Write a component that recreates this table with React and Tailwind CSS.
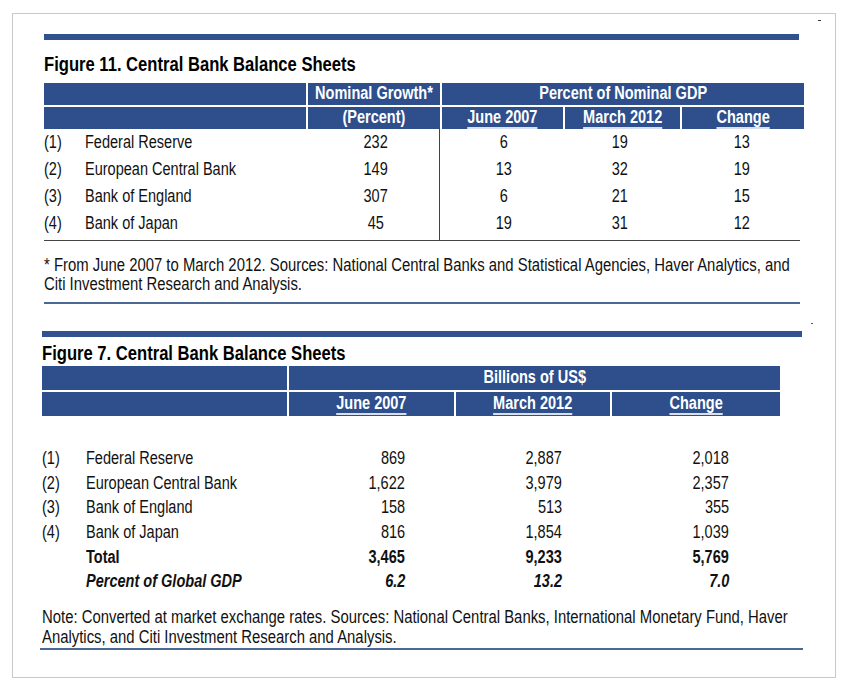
import React from "react";

const rows1 = [
  ["(1)", "Federal Reserve", "232", "6", "19", "13"],
  ["(2)", "European Central Bank", "149", "13", "32", "19"],
  ["(3)", "Bank of England", "307", "6", "21", "15"],
  ["(4)", "Bank of Japan", "45", "19", "31", "12"],
];

const rows2 = [
  ["(1)", "Federal Reserve", "869", "2,887", "2,018"],
  ["(2)", "European Central Bank", "1,622", "3,979", "2,357"],
  ["(3)", "Bank of England", "158", "513", "355"],
  ["(4)", "Bank of Japan", "816", "1,854", "1,039"],
];

// narrow text: Arial Narrow look made from Liberation Sans squeezed sideways
const N = ({ children, o = "origin-left" }) => (
  <span className={"inline-block whitespace-nowrap scale-x-[0.83] " + o}>{children}</span>
);

const P = ({ children }) => (
  <span className="inline-block whitespace-nowrap scale-x-[0.85] origin-left">{children}</span>
);

const Head = ({ children, className = "" }) => (
  <div className={"bg-[#2e4f8c] text-white font-bold text-[17.5px] leading-none flex items-center justify-center " + className}>
    {children}
  </div>
);

const Under = ({ children }) => (
  <span className="underline decoration-[#d8e0ee] decoration-2 underline-offset-[4px]">{children}</span>
);

export default function App() {
  return (
    <div className="w-full h-[688px] overflow-hidden bg-white pt-[13px] pl-[12px] font-['Liberation_Sans',sans-serif] text-[#111]">
      <div className="w-[824px] h-[665px] border border-[#c9c9c9] relative">
        <div className="absolute right-[14px] top-[6px] w-[3px] h-[1px] bg-[#333]" />
        <div className="absolute right-[22px] top-[309px] w-[2px] h-[1px] bg-[#555]" />

        {/* Figure 11 */}
        <div className="pl-[31px] pt-[20px]">
          <div className="w-[755px] h-[6px] bg-[#31528f]" />
          <div className="mt-[13px] text-[20px] font-bold leading-[22px] text-black">
            <N>Figure 11. Central Bank Balance Sheets</N>
          </div>

          <div className="mt-[8px] w-[756px] grid grid-cols-[262px_132px_121px_115px_122px] gap-[2px] bg-white">
            <Head className="h-[22px]" />
            <Head className="h-[22px]"><N o="origin-center">Nominal Growth*</N></Head>
            <Head className="h-[22px] col-span-3"><N o="origin-center">Percent of Nominal GDP</N></Head>
            <Head className="h-[22px]" />
            <Head className="h-[22px]"><N o="origin-center">(Percent)</N></Head>
            <Head className="h-[22px]"><N o="origin-center"><Under>June 2007</Under></N></Head>
            <Head className="h-[22px]"><N o="origin-center"><Under>March 2012</Under></N></Head>
            <Head className="h-[22px]"><N o="origin-center"><Under>Change</Under></N></Head>
          </div>

          <div className="w-[756px] grid grid-cols-[262px_133px_123px_116px_122px] border-b-[1.5px] border-[#444] text-[17.5px]">
            {rows1.map((r, i) => {
              const h = i === 3 ? "h-[30px] pb-[3px]" : "h-[27px]";
              return (
                <React.Fragment key={i}>
                  <div className={"flex items-center " + h}>
                    <span className="w-[41px]"><N>{r[0]}</N></span>
                    <N>{r[1]}</N>
                  </div>
                  <div className={"flex items-center justify-center pl-[6px] " + h}><N o="origin-center">{r[2]}</N></div>
                  <div className={"flex items-center justify-center pl-[6px] border-l-[1.5px] border-[#444] " + h}><N o="origin-center">{r[3]}</N></div>
                  <div className={"flex items-center justify-center " + h}><N o="origin-center">{r[4]}</N></div>
                  <div className={"flex items-center justify-center pl-[6px] " + h}><N o="origin-center">{r[5]}</N></div>
                </React.Fragment>
              );
            })}
          </div>

          <p className="mt-[15px] text-[17.5px] leading-[19px] whitespace-nowrap">
            <P>
              * From June 2007 to March 2012. Sources: National Central Banks and Statistical Agencies, Haver Analytics, and
              <br />
              Citi Investment Research and Analysis.
            </P>
          </p>
          <div className="mt-[8px] w-[756px] h-[2px] bg-[#4b6895]" />
        </div>

        {/* Figure 7 */}
        <div className="pl-[29px] pt-[27px]">
          <div className="w-[760px] h-[6px] bg-[#31528f]" />
          <div className="mt-[5px] text-[20px] font-bold leading-[22px] text-black">
            <N>Figure 7. Central Bank Balance Sheets</N>
          </div>

          <div className="mt-[2px] w-[736px] grid grid-cols-[245px_165px_154px_168px] gap-[2px] bg-white">
            <Head className="h-[24px]" />
            <Head className="h-[24px] col-span-3"><N o="origin-center">Billions of US$</N></Head>
            <Head className="h-[24px]" />
            <Head className="h-[24px]"><N o="origin-center"><Under>June 2007</Under></N></Head>
            <Head className="h-[24px]"><N o="origin-center"><Under>March 2012</Under></N></Head>
            <Head className="h-[24px]"><N o="origin-center"><Under>Change</Under></N></Head>
          </div>

          <div className="mt-[30px] w-[736px] text-[17.5px]">
            {rows2.map((r, i) => (
              <div key={i} className="flex items-center h-[24.6px]">
                <span className="w-[44px]"><N>{r[0]}</N></span>
                <span className="w-[201px]"><N>{r[1]}</N></span>
                <span className="w-[118px] text-right"><N o="origin-right">{r[2]}</N></span>
                <span className="w-[157px] text-right"><N o="origin-right">{r[3]}</N></span>
                <span className="w-[167px] text-right"><N o="origin-right">{r[4]}</N></span>
              </div>
            ))}
            <div className="flex items-center h-[24.6px] font-bold">
              <span className="w-[44px]" />
              <span className="w-[201px]"><N>Total</N></span>
              <span className="w-[118px] text-right"><N o="origin-right">3,465</N></span>
              <span className="w-[157px] text-right"><N o="origin-right">9,233</N></span>
              <span className="w-[167px] text-right"><N o="origin-right">5,769</N></span>
            </div>
            <div className="flex items-center h-[24.6px] font-bold italic">
              <span className="w-[44px]" />
              <span className="w-[201px]"><N>Percent of Global GDP</N></span>
              <span className="w-[118px] text-right"><N o="origin-right">6.2</N></span>
              <span className="w-[157px] text-right"><N o="origin-right">13.2</N></span>
              <span className="w-[167px] text-right"><N o="origin-right">7.0</N></span>
            </div>
          </div>

          <p className="mt-[13px] text-[17.5px] leading-[20px] whitespace-nowrap">
            <P>
              Note: Converted at market exchange rates. Sources: National Central Banks, International Monetary Fund, Haver
              <br />
              Analytics, and Citi Investment Research and Analysis.
            </P>
          </p>
          <div className="mt-[1px] -ml-[2px] w-[763px] h-[2px] bg-[#4b6895]" />
        </div>
      </div>
    </div>
  );
}
